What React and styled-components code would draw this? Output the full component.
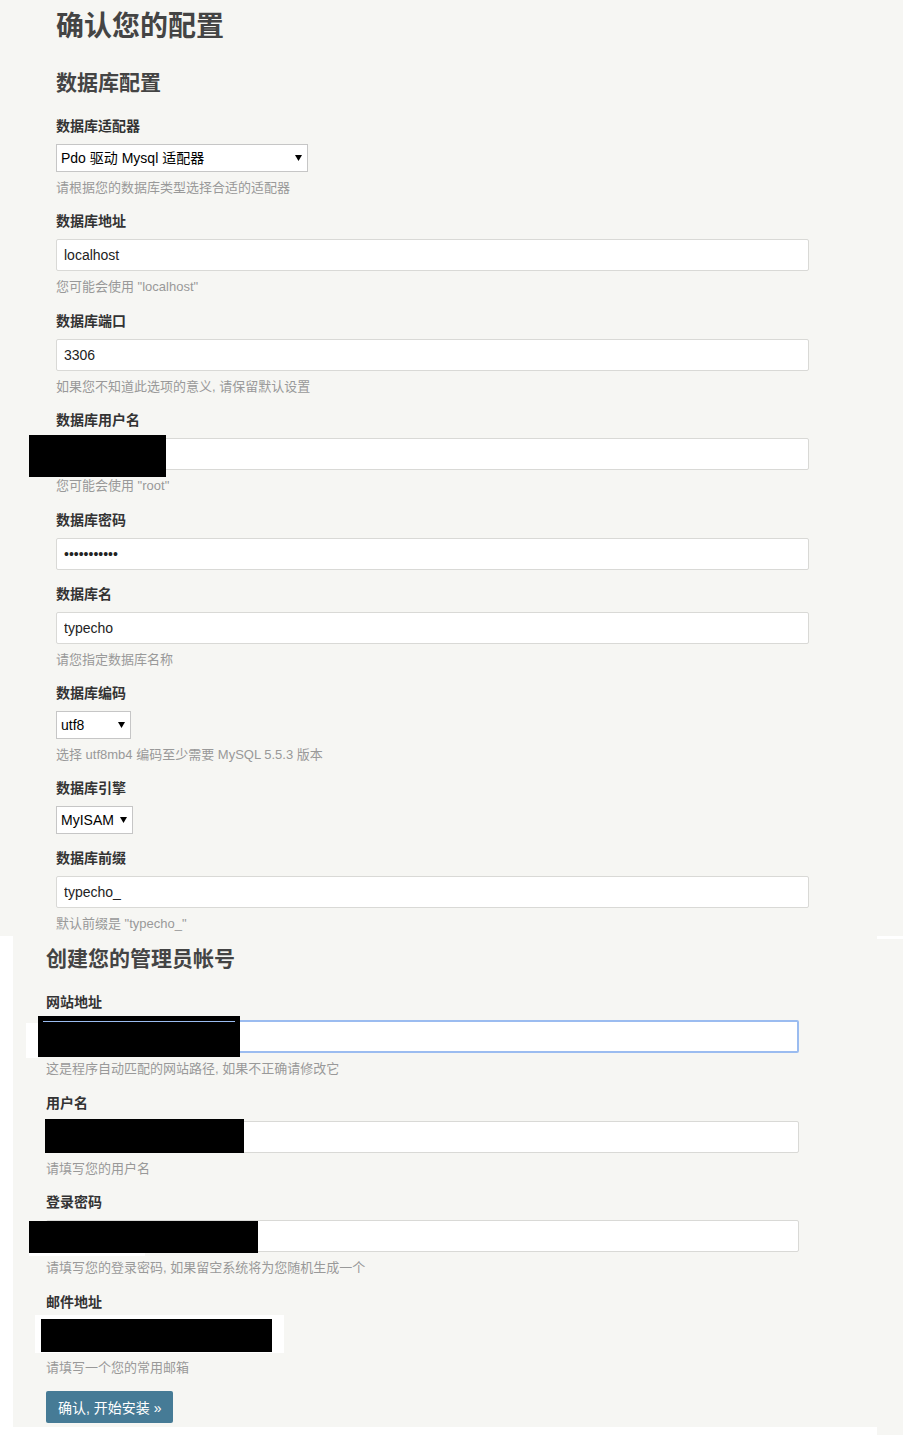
import React from 'react';
import styled, { createGlobalStyle } from 'styled-components';

const FONT = `"Liberation Sans", "Noto Sans CJK SC", sans-serif`;

const GlobalStyle = createGlobalStyle`
  html, body { margin: 0; padding: 0; background: #fff; }
  body {
    font-family: ${FONT};
    font-size: 14px;
    line-height: 1.5;
    color: #444;
  }
  *, *::before, *::after { box-sizing: border-box; }
`;

const Page = styled.div`
  display: flex;
  flex-direction: column;
  width: 903px;
  height: 1435px;
  overflow: hidden;
  background: #fff;
`;

const TopPanel = styled.section`
  height: 936px;
  flex: none;
  background: #f6f6f3;
  padding: 10px 0 0 56px;
`;

const BottomRow = styled.div`
  flex: 1;
  display: flex;
`;

const Gutter = styled.div`
  width: 13px;
  background: #fff;
`;

const BottomPanel = styled.section`
  width: 864px;
  background: #f6f6f3;
  padding: 7px 0 0 33px;
  border-bottom: 8px solid #fff;
`;

const RightFill = styled.div`
  flex: 1;
  background: #f6f6f3;
  border-top: 3px solid #fff;
`;

const Title = styled.h1`
  margin: 0;
  font-size: 28px;
  line-height: 34px;
  font-weight: bold;
  color: #444;
`;

const SectionTitle = styled.h3`
  margin: ${(p) => (p.$first ? '0' : '23px')} 0 0;
  font-size: 21px;
  line-height: 31px;
  font-weight: bold;
  color: #444;
`;

const Form = styled.div`
  width: 753px;
  margin-top: 18px;
  display: flex;
  flex-direction: column;
  gap: 14px;
`;

const Field = styled.div`
  display: flex;
  flex-direction: column;
  align-items: flex-start;
`;

const Label = styled.label`
  display: block;
  font-size: 14px;
  line-height: 21px;
  font-weight: bold;
  color: #333;
  margin-bottom: 7px;
`;

const Description = styled.p`
  margin: ${(p) => (p.$tight ? '5.5px' : '6px')} 0 0;
  font-size: 13px;
  line-height: 19.5px;
  color: #999;
`;

const Control = styled.div`
  position: relative;
  width: ${(p) => (p.$w ? `${p.$w}px` : '100%')};
`;

const TextInput = styled.input`
  display: block;
  width: 100%;
  height: ${(p) => (p.$focus ? '33px' : '32px')};
  margin: 0;
  padding: 0 7px;
  border: ${(p) => (p.$focus ? '2px solid #9bbcf0' : '1px solid #d9d9d6')};
  border-radius: 2px;
  background: #fff;
  font-family: ${FONT};
  font-size: 14px;
  color: #222;
  outline: none;
`;

const Select = styled.select`
  appearance: none;
  -webkit-appearance: none;
  display: block;
  width: 100%;
  height: 28px;
  margin: 0;
  padding: 0 16px 0 4px;
  border: 1px solid #c6c6c6;
  border-radius: 0;
  background: #fff;
  font-family: ${FONT};
  font-size: 14px;
  color: #000;
  outline: none;
`;

const Arrow = styled.svg`
  position: absolute;
  right: 6px;
  top: 11px;
  width: 7px;
  height: 6px;
  pointer-events: none;
`;

const Patch = styled.div`
  position: absolute;
  left: ${(p) => p.$l}px;
  top: ${(p) => p.$t}px;
  width: ${(p) => p.$w}px;
  height: ${(p) => p.$h}px;
  background: ${(p) => p.$c || '#000'};
`;

const BlueLine = styled.div`
  position: absolute;
  left: 5px;
  right: 5px;
  top: 5px;
  height: 1px;
  background: #9bbcf0;
`;

const Button = styled.button`
  margin-top: 14px;
  align-self: flex-start;
  height: 32px;
  padding: 0 12px;
  border: none;
  border-radius: 2px;
  background: #467b96;
  color: #fff;
  font-family: ${FONT};
  font-size: 14px;
  cursor: pointer;
`;

function SelectField({ width, value }) {
  return (
    <Control $w={width}>
      <Select defaultValue={value}>
        <option>{value}</option>
      </Select>
      <Arrow viewBox="0 0 7 6">
        <polygon points="0,0 7,0 3.5,6" fill="#000" />
      </Arrow>
    </Control>
  );
}

function Redactions({ items }) {
  return (
    <>
      {items.map((r, i) => (
        <Patch key={i} $l={r.l} $t={r.t} $w={r.w} $h={r.h} $c={r.c}>
          {r.line && <BlueLine />}
        </Patch>
      ))}
    </>
  );
}

function InputField({ label, value = '', type = 'text', desc, focus, redact }) {
  return (
    <Field>
      <Label>{label}</Label>
      <Control>
        <TextInput type={type} defaultValue={value} $focus={focus} readOnly />
        {redact && <Redactions items={redact} />}
      </Control>
      {desc && <Description>{desc}</Description>}
    </Field>
  );
}

function SelectRow({ label, width, value, desc }) {
  return (
    <Field>
      <Label>{label}</Label>
      <SelectField width={width} value={value} />
      {desc && <Description $tight>{desc}</Description>}
    </Field>
  );
}

export default function App() {
  return (
    <Page>
      <GlobalStyle />
      <TopPanel>
        <Title>确认您的配置</Title>
        <SectionTitle>数据库配置</SectionTitle>
        <Form>
          <SelectRow
            label="数据库适配器"
            width={252}
            value="Pdo 驱动 Mysql 适配器"
            desc="请根据您的数据库类型选择合适的适配器"
          />
          <InputField label="数据库地址" value="localhost" desc={'您可能会使用 "localhost"'} />
          <InputField label="数据库端口" value="3306" desc="如果您不知道此选项的意义, 请保留默认设置" />
          <InputField
            label="数据库用户名"
            desc={'您可能会使用 "root"'}
            redact={[{ l: -27, t: -3, w: 137, h: 42 }]}
          />
          <InputField label="数据库密码" type="password" value="xxxxxxxxxxx" />
          <InputField label="数据库名" value="typecho" desc="请您指定数据库名称" />
          <SelectRow
            label="数据库编码"
            width={75}
            value="utf8"
            desc="选择 utf8mb4 编码至少需要 MySQL 5.5.3 版本"
          />
          <SelectRow label="数据库引擎" width={77} value="MyISAM" />
          <InputField label="数据库前缀" value="typecho_" desc={'默认前缀是 "typecho_"'} />
        </Form>
      </TopPanel>
      <BottomRow>
        <Gutter />
        <BottomPanel>
          <SectionTitle $first>创建您的管理员帐号</SectionTitle>
          <Form>
            <InputField
              label="网站地址"
              focus
              desc="这是程序自动匹配的网站路径, 如果不正确请修改它"
              redact={[
                { l: -20, t: 3, w: 12, h: 35, c: '#fff' },
                { l: -8, t: -4, w: 202, h: 41, line: true },
              ]}
            />
            <InputField
              label="用户名"
              desc="请填写您的用户名"
              redact={[{ l: -1, t: -2, w: 199, h: 34 }]}
            />
            <InputField
              label="登录密码"
              desc="请填写您的登录密码, 如果留空系统将为您随机生成一个"
              redact={[
                { l: -17, t: 33, w: 116, h: 3, c: '#fff' },
                { l: -17, t: 1, w: 229, h: 32 },
              ]}
            />
            <Field>
              <InputField
                label="邮件地址"
                desc="请填写一个您的常用邮箱"
                redact={[
                  { l: -11, t: -5, w: 249, h: 38, c: '#fff' },
                  { l: -5, t: -1, w: 231, h: 33 },
                ]}
              />
              <Button type="button">确认, 开始安装 »</Button>
            </Field>
          </Form>
        </BottomPanel>
        <RightFill />
      </BottomRow>
    </Page>
  );
}
